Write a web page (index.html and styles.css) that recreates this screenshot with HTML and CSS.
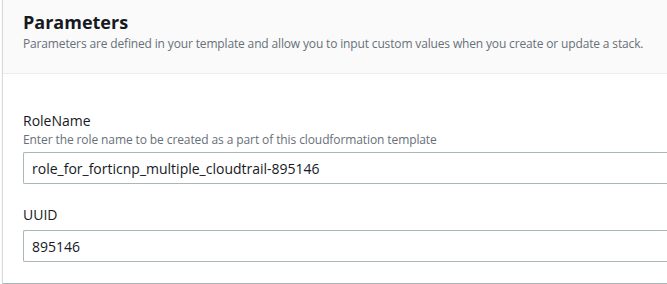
FILE: index.html
```html
<!DOCTYPE html>
<html lang="en">
  <head>
    <meta charset="UTF-8" />
    <meta name="viewport" content="width=device-width, initial-scale=1.0" />
    <title>Parameters</title>
    <link rel="stylesheet" href="styles.css">
  </head>
  <body>
    <div class="card">
      <div class="card-header">
        <h2 class="card-title">Parameters</h2>
        <p class="card-desc">Parameters are defined in your template and allow you to input custom values when you create or update a stack.</p>
      </div>
      <div class="card-body">
        <div class="field">
          <label class="field-label" for="roleName">RoleName</label>
          <div class="field-desc">Enter the role name to be created as a part of this cloudformation template</div>
          <input class="field-input" id="roleName" type="text" value="role_for_forticnp_multiple_cloudtrail-895146" />
        </div>
        <div class="field">
          <label class="field-label" for="uuid">UUID</label>
          <input class="field-input" id="uuid" type="text" value="895146" />
        </div>
      </div>
    </div>
  </body>
</html>
```

FILE: styles.css
```css
html,
body {
  margin: 0;
  padding: 0;
  overflow: hidden;
  background-color: #fff;
  font-family: "Open Sans", "Noto Sans", sans-serif;
  color: #16191f;
}
.card {
  margin-left: 2px;
  background-color: #fff;
  border-left: 1px solid #d5dbdb;
  border-bottom: 1px solid #aab7b8;
  box-shadow: 0 1px 1px 0 rgba(0, 28, 36, 0.12);
}
.card-header {
  background-color: #fafafa;
  border-bottom: 1px solid #eaeded;
  padding: 10px 0 21px 20px;
}
.card-title {
  margin: 0;
  font-size: 18px;
  line-height: 24px;
  font-weight: 700;
}
.card-desc {
  margin: 2px 0 0;
  font-size: 12px;
  line-height: 16px;
  letter-spacing: -0.15px;
  color: #687078;
}
.card-body {
  padding: 36px 0 21px 20px;
}
.field + .field {
  margin-top: 20px;
}
.field-label {
  display: block;
  font-size: 14px;
  line-height: 22px;
}
.field-desc {
  font-size: 12px;
  line-height: 16px;
  letter-spacing: -0.1px;
  color: #687078;
}
.field-input {
  display: block;
  box-sizing: border-box;
  width: 100%;
  height: 32px;
  margin-top: 4px;
  padding: 0 8px;
  border: 1px solid #aab7b8;
  border-right: none;
  border-radius: 2px 0 0 2px;
  font-family: inherit;
  font-size: 14px;
  color: #16191f;
  outline: none;
}
```
